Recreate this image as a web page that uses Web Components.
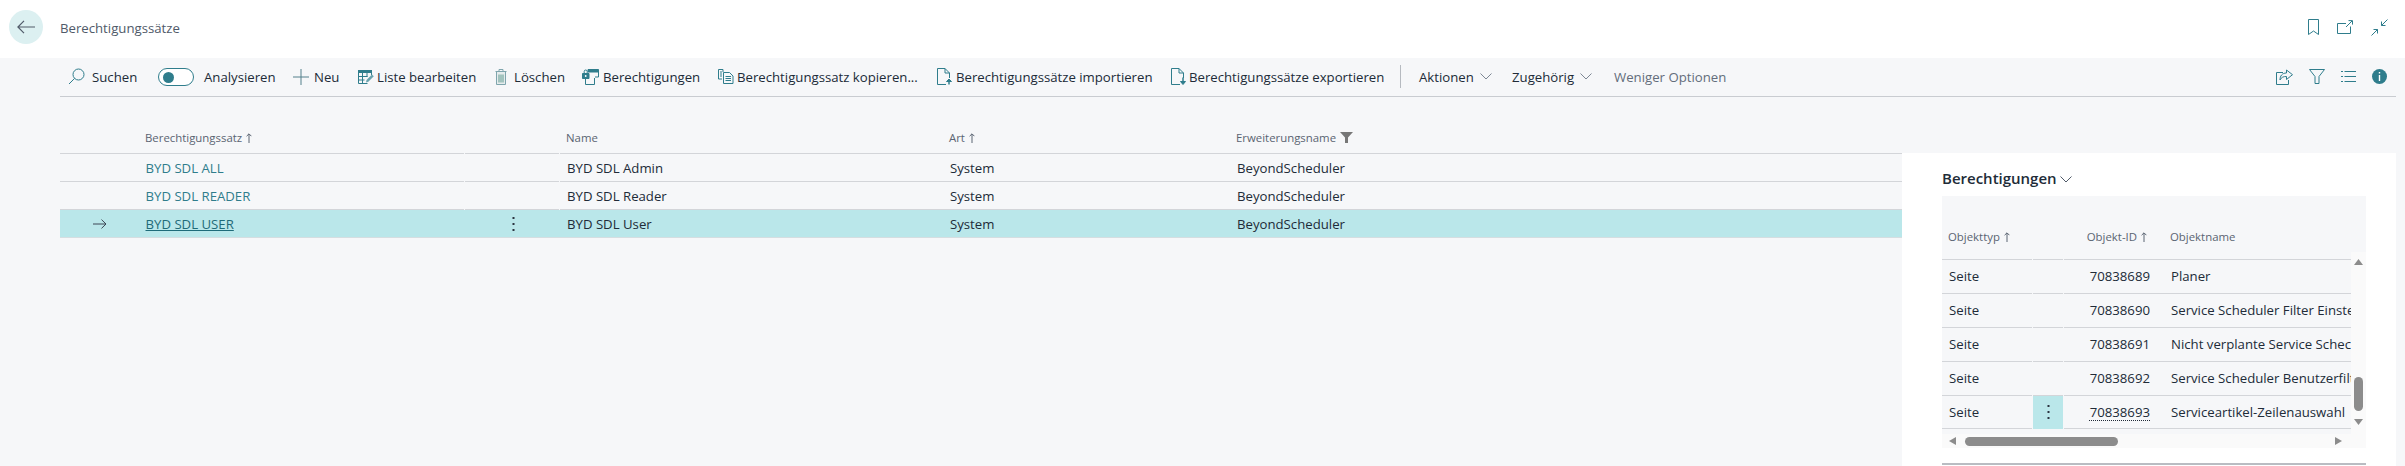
<!DOCTYPE html>
<html lang="de"><head><meta charset="utf-8"><title>Berechtigungssätze</title>
<style>
html,body{margin:0;padding:0;height:466px;overflow:hidden;background:#f6f7f9;font-family:"Open Sans","Noto Sans",sans-serif;color:#212b38}
</style></head><body>
<bc-page>
  <bc-header slot="header"></bc-header>
  <bc-actionbar slot="bar"></bc-actionbar>
  <bc-list slot="list"></bc-list>
  <bc-factbox slot="side"></bc-factbox>
</bc-page>
<script>
const T='#2f7d8c';
const I={
 search:`<svg width="17" height="17" viewBox="0 0 17 17" fill="none" stroke="${T}" stroke-width="1"><circle cx="10.5" cy="6.5" r="5.5"/><path d="M6.6 10.4 1 16"/></svg>`,
 plus:`<svg width="16" height="16" viewBox="0 0 16 16" fill="none" stroke="#55808c" stroke-width="1"><path d="M8 0v16M0 8h16"/></svg>`,
 table:`<svg width="16" height="14" viewBox="0 0 16 14" fill="none"><path d="M0 0h14v3H0z" fill="${T}"/><path d="M.5 3v10.5h9M.5 6.5h9M.5 10h6M4.5 3v10.5M9 3v4M13.5 3v2" stroke="${T}"/><path d="m8 12.5 .5-2.5 5.500-5.500 1.800 1.800-5.500 5.500z" fill="#6aa3ae"/></svg>`,
 trash:`<svg width="12" height="16" viewBox="0 0 12 16" fill="none" stroke="#7fa5ad"><path d="M4 2V.5h4V2M.5 2.500h11" /><path d="M1.500 3v12.500h9V3" fill="#e6eced"/><path d="M4 5.500v8M6 5.500v8M8 5.500v8" stroke="#5f9a8f"/></svg>`,
 perm:`<svg width="17" height="16" viewBox="0 0 17 16" fill="none" stroke="${T}"><path d="M6 .5h10.500v2.500H6z" fill="${T}"/><path d="M16.500 3v5H13M3.500 8v7.500h9V9"/><path d="M.5 4.500h6.500v5H.5z" fill="${T}"/><path d="M2.200 4.500V2.500a1.500 1.500 0 0 1 3 0v2" /><circle cx="3.700" cy="7" r=".9" fill="#fff" stroke="none"/></svg>`,
 copy:`<svg width="16" height="15" viewBox="0 0 16 15" fill="none" stroke="${T}"><path d="M5 3V.5H.5v9.500H4"/><path d="M2 3h2M2 5h2M2 7h2" /><path d="M5.500 3.500h6l3.500 3.500v7.500H5.500z" fill="#f6f7f9"/><path d="M7.500 7.500h5.500M7.500 9.500h5.500M7.500 11.500h5.500"/></svg>`,
 imp:`<svg width="15" height="17" viewBox="0 0 15 17" fill="none" stroke="${T}"><path d="M9 16.500H.5V.5H8L12.500 5v5"/><path d="M8 .5V5h4.500"/><path d="M12 16.500v-5" stroke-width="1.500"/><path d="m9.500 13.500 2.500-2.500 2.500 2.500z" fill="${T}"/></svg>`,
 exp:`<svg width="15" height="17" viewBox="0 0 15 17" fill="none" stroke="${T}"><path d="M9 16.500H.5V.5H8L12.500 5v5"/><path d="M8 .5V5h4.500"/><path d="M12 9.500v5" stroke-width="1.500"/><path d="m9.500 13.500 2.500 3 2.500-3z" fill="${T}"/></svg>`,
 chev:`<svg width="12" height="7" viewBox="0 0 12 7" fill="none" stroke="#7d8794"><path d="m.5.5 5.500 5.500 5.500-5.500"/></svg>`,
 up:`<svg width="6" height="10" viewBox="0 0 6 10" fill="none" stroke="#5a6472" style="margin-top:3px"><path d="M3 10V1M.6 3.200 3 .8l2.400 2.400"/></svg>`,
 funnel:`<svg width="13" height="11" viewBox="0 0 13 11" fill="#777" style="margin-top:2px"><path d="M0 0h13L8 5.500V11H5V5.500z"/></svg>`,
 dots:`<svg width="3" height="14" viewBox="0 0 3 14" fill="#2b3440"><rect x=".5" y="0" width="2" height="2"/><rect x=".5" y="6" width="2" height="2"/><rect x=".5" y="12" width="2" height="2"/></svg>`
};
function def(name,css,html){
  customElements.define(name,class extends HTMLElement{
    constructor(){super();const r=this.attachShadow({mode:'open'});
      r.innerHTML=`<style>${css}</style>`+(typeof html==='function'?html(this):html);}
    connectedCallback(){ if(typeof html==='function'){const s=this.shadowRoot.querySelector('style').outerHTML;this.shadowRoot.innerHTML=s+html(this);} }
  });
}
def('bc-page',`
 :host{display:grid;grid-template-columns:60px 1842px 494px 9px;grid-template-rows:58px 39px 1fr;height:466px;width:2405px;overflow:hidden}
 .h{grid-column:1/-1;grid-row:1}.b{grid-column:2/4;grid-row:2}.l{grid-column:2;grid-row:3}.s{grid-column:3;grid-row:3;margin-top:56px;min-height:0}
`,`<div class="h"><slot name="header"></slot></div><div class="b"><slot name="bar"></slot></div><div class="l"><slot name="list"></slot></div><div class="s"><slot name="side"></slot></div>`);

def('bc-header',`
 :host{display:flex;align-items:center;height:58px;background:#fff;padding:0 17px 0 9px;box-sizing:border-box}
 .back{width:34px;height:34px;border-radius:50%;background:#dcf0f1;display:flex;align-items:center;justify-content:center;flex:none;margin-top:-4px}
 .t{font-size:13.2px;color:#505a69;margin-left:17px;margin-top:-3px;flex:1}
 .ic{display:flex;align-items:center;gap:18px;margin-top:-4px}
`,`<div class="back"><svg width="18" height="14" viewBox="0 0 18 14" fill="none" stroke="#505a69" stroke-width="1.200"><path d="M18 7H1M7 .8 .9 7 7 13.200"/></svg></div>
 <div class="t">Berechtigungssätze</div>
 <div class="ic">
  <svg width="11" height="16" viewBox="0 0 11 16" fill="none" stroke="${T}"><path d="M.5.500h10v15L5.500 12l-5 3.500z"/></svg>
  <svg width="16" height="14" viewBox="0 0 16 14" fill="none" stroke="${T}"><path d="M13.500 6.500v7H.5v-10H9"/><path d="m9 7 6-6M11.500.6h4v4"/></svg>
  <svg width="17" height="17" viewBox="0 0 17 17" fill="none" stroke="${T}"><path d="m16.500.5-6 6M10.500 2.500v4h4M.5 16.500l6-6M2.500 10.500h4v4"/></svg>
 </div>`);

def('bc-action',`
 :host{display:flex;align-items:center;flex:none;font-size:13.2px;color:#212b38;white-space:nowrap;box-sizing:border-box}
 .i{display:flex;align-items:center;margin-right:var(--g,4px)}
`,el=>`<span class="i" style="--g:${el.getAttribute('g')||0}px">${el.getAttribute('icon')?I[el.getAttribute('icon')]:''}</span><slot></slot>${el.getAttribute('chev')!==null?`<span style="display:flex;margin-left:6px">${I.chev}</span>`:''}`);

def('bc-toggle',`
 :host{display:block;width:36px;height:18px;box-sizing:border-box;border:1px solid ${T};border-radius:9px;background:#fff;position:relative;flex:none;margin-right:10px}
 i{display:block;width:11px;height:11px;border-radius:50%;background:${T};margin:3px 0 0 4px}
`,`<i></i>`);

def('bc-actionbar',`
 :host{display:flex;align-items:center;height:39px;box-sizing:border-box;border-bottom:1px solid #c9ccd1;padding:0 9px 1px 8px;margin-bottom:0}
 .sep{width:1px;height:23px;background:#b6bac0;margin-right:18px;flex:none}
 .r{margin-left:auto;display:flex;align-items:center;gap:16px}
 .tg{display:flex;align-items:center;flex:none;font-size:13.2px}
`,`<bc-action icon="search" g="7" style="width:90px">Suchen</bc-action>
 <div class="tg" style="width:135px"><bc-toggle></bc-toggle>Analysieren</div>
 <bc-action icon="plus" g="5" style="width:65px">Neu</bc-action>
 <bc-action icon="table" g="3" style="width:137px">Liste bearbeiten</bc-action>
 <bc-action icon="trash" g="7" style="width:87px">Löschen</bc-action>
 <bc-action icon="perm" g="4" style="width:136px">Berechtigungen</bc-action>
 <bc-action icon="copy" g="3" style="width:219px">Berechtigungssatz kopieren...</bc-action>
 <bc-action icon="imp" g="4" style="width:234px">Berechtigungssätze importieren</bc-action>
 <bc-action icon="exp" g="3" style="width:229px">Berechtigungssätze exportieren</bc-action>
 <div class="sep"></div>
 <bc-action chev style="width:93px">Aktionen</bc-action>
 <bc-action chev style="width:102px">Zugehörig</bc-action>
 <bc-action style="color:#636d7b">Weniger Optionen</bc-action>
 <div class="r">
  <svg width="17" height="16" viewBox="0 0 17 16" fill="none" stroke="${T}"><path d="M7 3.500H.5v12h12V11"/><path d="M10.500 1v3C6 4 4 7 4 11c1.500-3 3.500-3.500 6.500-3.500v3l6-4.800z"/></svg>
  <svg width="16" height="15" viewBox="0 0 16 15" fill="none" stroke="${T}"><path d="M.5.500h15L10 7.500v7H6v-7z"/></svg>
  <svg width="15" height="11" viewBox="0 0 15 11" fill="none" stroke="${T}"><path d="M0 .5h2M0 5.500h2M0 10.500h2M3.500.5H15M3.500 5.500H15M3.500 10.500H15"/></svg>
  <svg width="15" height="15" viewBox="0 0 15 15"><circle cx="7.500" cy="7.500" r="7.500" fill="${T}"/><path d="M6.800 3h1.400v1.500H6.800zM6.800 6h1.400v6H6.800z" fill="#fff"/></svg>
 </div>`);

def('bc-list',`
 :host{display:block;font-size:13.2px}
 .row{display:grid;grid-template-columns:79px 326px 95px 383px 287px 672px;height:28px}
 .c{display:flex;align-items:center;padding-left:7px;border-bottom:1px solid #d3d5d9;white-space:nowrap;box-sizing:border-box;min-width:0}
 .g{margin-right:1px}
 .head{height:57px}
 .head .c{font-size:11.4px;color:#5a6472;align-items:flex-start;padding-top:33px;padding-left:6px;gap:4px}
 .link{color:${T};padding-left:6.500px}
 .sel .c{background:#bae7ea;border-bottom-color:#d5dee1}
 .sel .g{margin-right:0}
 .sel .link{text-decoration:underline;color:#1f6b79}
 .m{padding:0 0 0 33px}
 .d{padding-left:0;padding-right:0}
 .d svg{margin-left:47px}
`,`<div class="row head"><div class="c"></div><div class="c g">Berechtigungssatz ${I.up}</div><div class="c g"></div><div class="c">Name</div><div class="c">Art ${I.up}</div><div class="c">Erweiterungsname ${I.funnel}</div></div>
 <div class="row"><div class="c"></div><div class="c g link">BYD SDL ALL</div><div class="c g"></div><div class="c">BYD SDL Admin</div><div class="c">System</div><div class="c">BeyondScheduler</div></div>
 <div class="row"><div class="c"></div><div class="c g link">BYD SDL READER</div><div class="c g"></div><div class="c">BYD SDL Reader</div><div class="c">System</div><div class="c">BeyondScheduler</div></div>
 <div class="row sel"><div class="c m"><svg width="14" height="10" viewBox="0 0 14 10" fill="none" stroke="#3c4654"><path d="M0 5h13M8.500.6 13 5 8.500 9.400"/></svg></div><div class="c g link">BYD SDL USER</div><div class="c g d">${I.dots}</div><div class="c">BYD SDL User</div><div class="c">System</div><div class="c">BeyondScheduler</div></div>`);

const arrow=(p)=>`<svg width="8" height="8" viewBox="0 0 8 8" fill="#8c8c8c"><path d="${p}"/></svg>`;
def('bc-factbox',`
 :host{display:block;background:#fff;height:313px;box-sizing:border-box;padding:0 30px 0 40px;overflow:hidden}
 .title{height:43px;display:flex;align-items:flex-start;gap:3px;font-size:15px;font-weight:600;color:#212b38;padding-top:15px;box-sizing:border-box;line-height:20px}
 .title svg{margin-top:8px}
 .wrap{position:relative;background:#f6f7f9;width:424px;height:252px;font-size:13.2px}
 .row{display:grid;grid-template-columns:91px 30px 100px 188px;width:409px;height:34px}
 .c{display:flex;align-items:center;border-bottom:1px solid #d3d5d9;white-space:nowrap;overflow:hidden;box-sizing:border-box;padding-bottom:2px}
 .c:first-child{padding-left:7px;margin-right:1px}
 .n{justify-content:flex-end;padding-right:13px;margin-left:1px}
 .o{padding-left:8px}
 .head{height:64px}
 .head .c{font-size:11.4px;color:#5a6472;align-items:flex-start;padding-top:33px;gap:4px}
 .head .c:first-child{padding-left:6px}
 .head .n{padding-right:16px}
 .head .o{padding-left:7px}
 .last{height:33px}
 .last .c{padding-bottom:1px}
 .last .x{background:#bae7ea;border-bottom-color:#bae7ea;justify-content:center}
 .u{text-decoration:underline dotted #212b38 1px;text-underline-offset:3px}
 .hs{position:absolute;left:0;top:238px;width:409px;height:14px;background:#fafafa;display:flex;align-items:center;box-sizing:border-box}
 .ht{position:absolute;left:23px;top:3px;width:153px;height:9px;border-radius:5px;background:#8c8c8c}
 .vs{position:absolute;right:0;top:56px;width:15px;height:196px;background:#fafafa}
 .vt{position:absolute;left:3px;top:125px;width:9px;height:34px;border-radius:5px;background:#8c8c8c}
 .a{position:absolute;display:flex}
 .foot{height:2px;width:424px;background:#b9bcc2;margin-top:15px}
`,`<div class="title">Berechtigungen<svg width="12" height="7" viewBox="0 0 12 7" fill="none" stroke="#505a69"><path d="m.5.500 5.500 5.500 5.500-5.500"/></svg></div>
 <div class="wrap">
  <div class="row head"><div class="c">Objekttyp ${I.up}</div><div class="c"></div><div class="c n">Objekt-ID ${I.up}</div><div class="c o">Objektname</div></div>
  ${[['70838689','Planer'],['70838690','Service Scheduler Filter Einste'],['70838691','Nicht verplante Service Schec'],['70838692','Service Scheduler Benutzerfilt']].map(r=>`<div class="row"><div class="c">Seite</div><div class="c"></div><div class="c n">${r[0]}</div><div class="c o">${r[1]}</div></div>`).join('')}
  <div class="row last"><div class="c">Seite</div><div class="c x">${I.dots}</div><div class="c n"><span class="u">70838693</span></div><div class="c o">Serviceartikel-Zeilenauswahl</div></div>
  <div class="hs"><span class="a" style="left:7px;top:3px">${arrow('M7 0v8L0 4z')}</span><div class="ht"></div><span class="a" style="left:393px;top:3px">${arrow('M0 0v8l7-4z')}</span></div>
  <div class="vs"><span class="a" style="left:3px;top:7px"><svg width="9" height="7" viewBox="0 0 9 7" fill="#8c8c8c"><path d="M4.500 0 9 6H0z"/></svg></span><div class="vt"></div><span class="a" style="left:3px;top:167px"><svg width="9" height="7" viewBox="0 0 9 7" fill="#8c8c8c"><path d="M0 0h9L4.500 6z"/></svg></span></div>
 </div>
 <div class="foot"></div>`);
</script>
</body></html>
